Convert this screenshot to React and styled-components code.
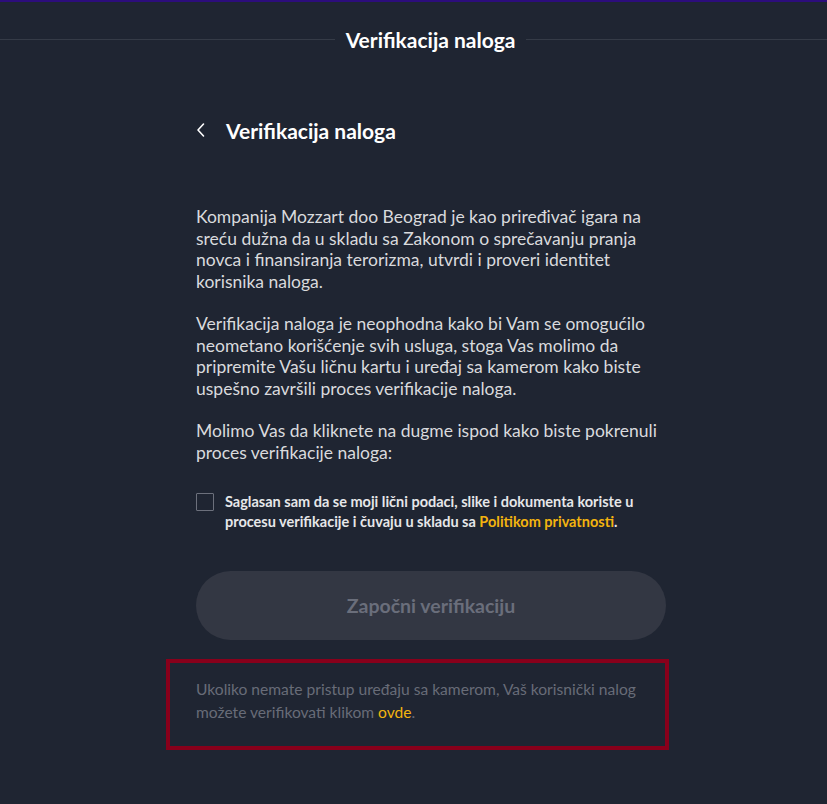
import React, { useState } from 'react'
import styled, { createGlobalStyle } from 'styled-components'

const GlobalStyle = createGlobalStyle`
  html, body {
    margin: 0;
    padding: 0;
    background: #1f2532;
  }
  body {
    font-family: Lato, "Open Sans", sans-serif;
  }
`

const Page = styled.div`
  min-height: 804px;
  background: #1f2532;
  border-top: 2px solid #2c0d7c;
  box-sizing: border-box;
`
const TopBar = styled.div`
  display: flex;
  align-items: center;
  gap: 11px;
  height: 76px;
  padding-bottom: 2px;
  box-sizing: border-box;

  &::before, &::after {
    content: '';
    height: 1px;
    background: #353b47;
  }
  &::before { flex: 333; }
  &::after { flex: 299; }
`
const TopTitle = styled.h1`
  margin: 0;
  font-size: 21px;
  font-weight: 700;
  color: #ffffff;
`
const Column = styled.div`
  width: 470px;
  margin: 0 auto;
  padding-left: 35px;
`
const Heading = styled.div`
  display: flex;
  align-items: center;
  gap: 20px;
  margin-top: 38px;
  height: 28px;
`
const BackBtn = styled.button`
  display: flex;
  border: none;
  background: none;
  padding: 0;
  color: #ffffff;
  cursor: pointer;
`
const HeadingTitle = styled.h2`
  margin: 0;
  font-size: 21px;
  font-weight: 700;
  color: #ffffff;
`
const Text = styled.div`
  margin-top: 62px;
  font-size: 17.5px;
  line-height: 21.5px;
  color: #d9dadd;

  p {
    margin: 0 0 21px;
  }
`
const Consent = styled.label`
  display: flex;
  gap: 11px;
  margin-top: 29px;
  font-size: 14.5px;
  font-weight: 700;
  line-height: 19.5px;
  color: #e6e7e9;
  cursor: pointer;
`
const Box = styled.span`
  flex: none;
  width: 16px;
  height: 16px;
  margin-top: 1px;
  border: 1px solid #6c707c;
  border-radius: 1px;
`
const Link = styled.a`
  color: #f3b40f;
  font-weight: ${props => props.bold ? 700 : 400};
  text-decoration: none;
`
const StartButton = styled.button`
  display: block;
  width: 470px;
  height: 69px;
  margin-top: 40px;
  border: none;
  border-radius: 35px;
  background: #333743;
  color: #6a6e7b;
  font-family: inherit;
  font-size: 19.5px;
  font-weight: 700;
  cursor: not-allowed;
`
const Notice = styled.div`
  width: 503px;
  margin: 19px 0 0 -30px;
  padding: 15px 0 22px 26px;
  border: 4px solid #88001b;
  box-sizing: border-box;
  font-size: 15.6px;
  line-height: 23px;
  color: #686c78;
`

const ChevronLeft = () => (
  <svg width="10" height="16" viewBox="0 0 10 16" fill="none">
    <path d="M7.5 2 L2 8 L7.5 14" stroke="currentColor" strokeWidth="1.6" strokeLinecap="round" strokeLinejoin="round"/>
  </svg>
)

const App = () => {
  const [agreed, setAgreed] = useState(false)

  return (
    <Page>
      <GlobalStyle/>
      <TopBar>
        <TopTitle>Verifikacija naloga</TopTitle>
      </TopBar>
      <Column>
        <Heading>
          <BackBtn aria-label="Nazad"><ChevronLeft/></BackBtn>
          <HeadingTitle>Verifikacija naloga</HeadingTitle>
        </Heading>
        <Text>
          <p>Kompanija Mozzart doo Beograd je kao priređivač igara na sreću dužna da u skladu sa Zakonom o sprečavanju pranja novca i finansiranja terorizma, utvrdi i proveri identitet korisnika naloga.</p>
          <p>Verifikacija naloga je neophodna kako bi Vam se omogućilo neometano korišćenje svih usluga, stoga Vas molimo da pripremite Vašu ličnu kartu i uređaj sa kamerom kako biste uspešno završili proces verifikacije naloga.</p>
          <p>Molimo Vas da kliknete na dugme ispod kako biste pokrenuli proces verifikacije naloga:</p>
        </Text>
        <Consent onClick={() => setAgreed(!agreed)}>
          <Box/>
          <span>
            Saglasan sam da se moji lični podaci, slike i dokumenta koriste u procesu verifikacije i čuvaju u skladu sa <Link bold href="#">Politikom privatnosti</Link>.
          </span>
        </Consent>
        <StartButton disabled={!agreed}>Započni verifikaciju</StartButton>
        <Notice>
          Ukoliko nemate pristup uređaju sa kamerom, Vaš korisnički nalog možete verifikovati klikom <Link href="#">ovde</Link>.
        </Notice>
      </Column>
    </Page>
  )
}

export default App
